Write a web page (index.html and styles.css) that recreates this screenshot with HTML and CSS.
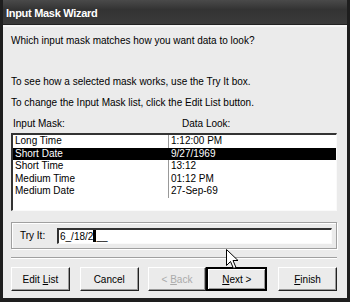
FILE: index.html
```html
<!DOCTYPE html>
<html lang="en">

<head>
    <meta charset="UTF-8">
    <title>Input Mask Wizard</title>
    <link rel="stylesheet" href="styles.css">
</head>

<body>
    <div class="window">
        <!-- Title bar -->
        <div class="titlebar">Input Mask Wizard</div>

        <div class="content">
            <p class="prompt">Which input mask matches how you want data to look?</p>
            <p class="hint first">To see how a selected mask works, use the Try It box.</p>
            <p class="hint">To change the Input Mask list, click the Edit List button.</p>

            <!-- Mask list -->
            <div class="list-head">
                <span class="col-name">Input Mask:</span>
                <span class="col-look">Data Look:</span>
            </div>
            <div class="listbox">
                <div class="row"><span class="col-name">Long Time</span><span class="col-look">1:12:00 PM</span></div>
                <div class="row selected"><span class="col-name">Short Date</span><span class="col-look">9/27/1969</span></div>
                <div class="row"><span class="col-name">Short Time</span><span class="col-look">13:12</span></div>
                <div class="row"><span class="col-name">Medium Time</span><span class="col-look">01:12 PM</span></div>
                <div class="row"><span class="col-name">Medium Date</span><span class="col-look">27-Sep-69</span></div>
            </div>

            <!-- Try it box -->
            <div class="tryit">
                <span class="tryit-label">Try It:</span>
                <div class="tryit-input">6_/18/2<span class="caret"></span>__</div>
            </div>

            <div class="separator"></div>

            <!-- Buttons -->
            <div class="buttons">
                <button class="btn">Edit <u>L</u>ist</button>
                <button class="btn gap-small">Cancel</button>
                <button class="btn gap-small" disabled>&lt; <u>B</u>ack</button>
                <button class="btn default"><u>N</u>ext &gt;</button>
                <button class="btn gap-wide"><u>F</u>inish</button>
            </div>
        </div>

        <!-- Mouse pointer -->
        <svg class="pointer" width="13" height="21" viewBox="0 0 13 21">
            <path d="M0.5 0.5 L0.5 16.5 L4.5 12.5 L7.5 19.5 L10 18.5 L7 11.5 L12 11.5 Z" fill="#fff" stroke="#000" stroke-width="1" stroke-linejoin="miter" />
        </svg>
    </div>
</body>

</html>
```

FILE: styles.css
```css
/* Wizard dialog */
body {
    margin: 0;
    background: #222;
}

.window {
    position: relative;
    width: 344px;
    height: 298px;
    border-left: 3px solid #1e1e1e;
    border-right: 3px solid #1e1e1e;
    border-bottom: 4px solid #1e1e1e;
    background: #ebebeb;
    font-family: "Liberation Sans", Arial, sans-serif;
    font-size: 10px;
    color: #000;
    overflow: hidden;
}

.titlebar {
    height: 25px;
    line-height: 27px;
    padding-left: 3px;
    background: linear-gradient(#4a4a4a, #333 40%, #3a3a3a);
    color: #fff;
    font-weight: bold;
    font-size: 11px;
    letter-spacing: -0.3px;
    box-sizing: border-box;
    border-bottom: 1px solid #222;
}

.content {
    padding: 0 10px 0 8px;
    border-top: 2px solid #f6f6f6;
}

.prompt,
.hint {
    margin: 0;
    line-height: 14px;
}

.prompt {
    padding-top: 7px;
}

.hint.first {
    margin-top: 27px;
}

.hint {
    margin-top: 7px;
}

/* List with two columns */
.list-head {
    display: flex;
    margin-top: 7px;
    line-height: 14px;
}

.col-name {
    box-sizing: border-box;
    width: 156px;
    padding-left: 2px;
}

.col-look {
    padding-left: 2px;
}

.list-head .col-name {
    width: 169px;
}

.listbox {
    margin-top: 2px;
    height: 78px;
    box-sizing: border-box;
    background: #fff;
    border-top: 2px solid #333;
    border-left: 2px solid #333;
    border-right: 1px solid #fafafa;
    border-bottom: 1px solid #fafafa;
}

.row {
    display: flex;
    height: 12.5px;
    line-height: 12.5px;
}

.row .col-name {
    border-right: 1px solid #999;
}

.row.selected {
    background: #000;
    color: #fff;
}

.row.selected .col-name {
    border-right-color: #000;
}

/* Try It group */
.tryit {
    display: flex;
    align-items: center;
    margin-top: 11px;
    height: 27px;
    box-sizing: border-box;
    border: 1px solid #a0a0a0;
    box-shadow: inset 1px 1px 0 #fff, 1px 1px 0 #fff;
    padding: 0 4px 0 8px;
}

.tryit-label {
    width: 37px;
}

.tryit-input {
    flex: 1;
    height: 16px;
    line-height: 14px;
    box-sizing: border-box;
    background: #fff;
    border-top: 2px solid #333;
    border-left: 2px solid #333;
    border-right: 1px solid #fafafa;
    border-bottom: 1px solid #fafafa;
    padding-left: 1px;
}

.caret {
    display: inline-block;
    width: 3px;
    height: 12px;
    vertical-align: -2px;
    background: #000;
}

.separator {
    margin-top: 8px;
    border-top: 1px solid #a0a0a0;
    border-bottom: 1px solid #fff;
}

/* Dialog buttons */
.buttons {
    display: flex;
    margin-top: 8px;
}

.btn {
    width: 59px;
    height: 24px;
    padding: 0;
    font-family: inherit;
    font-size: 10px;
    color: #000;
    background: #ebebeb;
    border: 1px solid;
    border-color: #fff #222 #222 #fff;
    box-shadow: inset -1px -1px 0 #9a9a9a;
}

.btn:disabled {
    color: #aaa;
}

.btn.default {
    width: 61px;
    border-width: 2px;
    border-color: #000;
    box-shadow: inset 1px 1px 0 #fff, inset -1px -1px 0 #9a9a9a;
}

.gap-small {
    margin-left: 10px;
}

.btn.gap-small + .gap-small {
    margin-left: 9px;
}

.gap-wide {
    margin-left: 11px;
}

.pointer {
    position: absolute;
    left: 223px;
    top: 249px;
}
```
